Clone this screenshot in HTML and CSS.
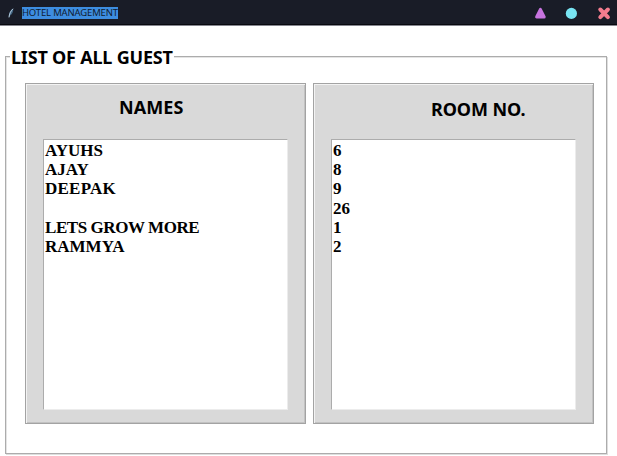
FILE: index.html
```html
<!DOCTYPE html>
<html lang="en">
<head>
<meta charset="utf-8">
<title>HOTEL MANAGEMENT</title>
<link rel="stylesheet" href="styles.css">
</head>
<body>
<header class="titlebar">
  <svg class="feather" width="8" height="12" viewBox="0 0 8 12"><path d="M1.9 10.4C1.4 6.6 3 3 6.2 1.4 6.6 4 5.4 7 3.2 8.6Z" fill="#426583"/><path d="M2 10.4C2.3 7 3.7 4 6 1.8" fill="none" stroke="#c5d9e8" stroke-width=".9"/></svg>
  <span class="title">HOTEL MANAGEMENT</span>
  <svg class="controls" width="80" height="16" viewBox="0 0 80 16">
    <path d="M8.4 4.4 4.6 12h7.6Z" fill="#c774df" stroke="#c774df" stroke-width="3" stroke-linejoin="round"/>
    <circle cx="39.4" cy="8.4" r="5.6" fill="#78e4f2"/>
    <path d="m68.3 4.5 7.6 7.6m0-7.6-7.6 7.6" stroke="#f47c8e" stroke-width="4.2" stroke-linecap="butt"/>
  </svg>
</header>
<main class="group">
  <h1 class="legend"><span>LIST OF ALL GUEST</span></h1>
  <div class="panels">
    <section class="panel">
      <h2 class="heading names">NAMES</h2>
      <ul class="list">
        <li>AYUHS</li><li>AJAY</li><li class="loose">DEEPAK</li><li></li><li class="tight">LETS GROW MORE</li><li>RAMMYA</li>
      </ul>
    </section>
    <section class="panel">
      <h2 class="heading rooms">ROOM NO.</h2>
      <ul class="list">
        <li>6</li><li>8</li><li>9</li><li>26</li><li>1</li><li>2</li>
      </ul>
    </section>
  </div>
</main>
</body>
</html>
```
FILE: styles.css
```css
* { box-sizing: border-box; }
body { margin: 0; height: 456px; overflow: hidden; background: #fff; color: #000; }
.titlebar {
  display: flex; align-items: center; height: 26px; padding: 0 5px 0 7px;
  background: #191c27; border-bottom: 1px solid #85868f;
  box-shadow: inset 0 -1px #08090f;
}
.feather { margin-right: 7px; }
.title {
  height: 12px; padding: 0; background: #3d8de0; color: #101c30; white-space: nowrap;
  font: 9.5px/12px "Noto Sans", sans-serif; letter-spacing: -.17px;
}
.controls { margin-left: auto; }
.controls path:last-child { stroke-linecap: round; stroke-width: 4; }
.group {
  width: 602px; height: 398px; margin: 30px 0 0 5px; padding: 0 13px 0 19px;
  border: 1px solid #acacac; box-shadow: 1px 1px #dedede, inset 1px 1px #e4e4e4;
}
.legend { margin: -12px 0 0 -15px; height: 24px; font: bold 18px/24px "Noto Sans", sans-serif; white-space: nowrap; }
.legend span { display: inline-block; background: #fff; padding: 0 1px; letter-spacing: -.2px; }
.panels { display: flex; gap: 7px; margin-top: 14px; }
.panel {
  flex: none; width: 281px; height: 341px; padding: 0 17px; background: #d9d9d9;
  border: 1px solid #a3a3a3; box-shadow: inset 1px 1px #f3f3f3, inset -1px -1px #c2c2c2;
}
.heading { margin: 0; height: 55px; white-space: nowrap; font: bold 18px/24px "Noto Sans", sans-serif; }
.names { padding: 11px 0 0 76px; letter-spacing: .1px; }
.rooms { padding: 13px 0 0 100px; letter-spacing: -.1px; }
.list {
  list-style: none; margin: 0; width: 245px; height: 271px; padding: 1px 0 0 1px; background: #fff;
  border: 1px solid; border-color: #acacac #ececec #ececec #acacac;
  font: bold 17px/19.2px "Liberation Serif", serif; white-space: nowrap;
}
.list li { height: 19.2px; }
.list .loose { letter-spacing: .25px; }
.list .tight { letter-spacing: -.43px; }
```
